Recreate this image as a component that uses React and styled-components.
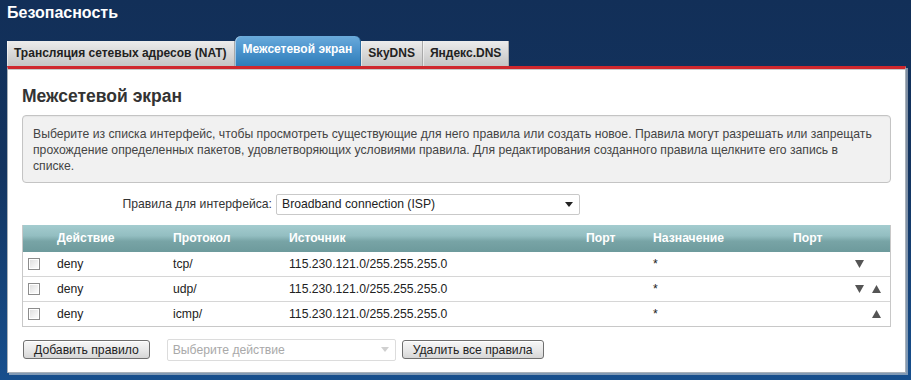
import React from "react";
import styled, { createGlobalStyle } from "styled-components";

const FS = "12.2px";

const GlobalStyle = createGlobalStyle`
  html, body {
    margin: 0;
    padding: 0;
  }
  body {
    font-family: "Liberation Sans", Arial, sans-serif;
    font-size: ${FS};
    background: linear-gradient(180deg, #122f58 0%, #133460 45%, #174f8d 100%);
    min-height: 380px;
    overflow: hidden;
  }
`;

const Page = styled.div`
  padding: 0 5px 0 7px;
  height: 380px;
  box-sizing: border-box;
`;

const Header = styled.div`
  height: 36px;
  box-sizing: border-box;
  padding-top: 4px;
`;

const PageTitle = styled.h1`
  margin: 0;
  color: #fff;
  font-size: 16px;
  line-height: 18px;
  font-weight: bold;
`;

const TabBar = styled.div`
  display: flex;
  align-items: flex-end;
  height: 29.5px;
`;

const Tab = styled.div`
  box-sizing: border-box;
  height: ${(p) => (p.$active ? "30px" : "24.5px")};
  padding: ${(p) => (p.$active ? "0 8px 4px" : "0 7px")};
  display: flex;
  align-items: center;
  font-weight: bold;
  font-size: 12px;
  color: ${(p) => (p.$active ? "#fff" : "#222")};
  background: ${(p) =>
    p.$active
      ? "linear-gradient(180deg, #6aaadb 0%, #4a93cc 50%, #2f7db8 100%)"
      : "linear-gradient(180deg, #ececec 0%, #d6d6d6 55%, #c4c4c4 100%)"};
  border-radius: ${(p) => (p.$active ? "6px 6px 0 0" : "0")};
  border-right: 1px solid ${(p) => (p.$active ? "#2f6fa3" : "#a9a9a9")};
  box-shadow: inset 1px 0 0 rgba(255, 255, 255, 0.5);
  white-space: nowrap;
`;

const Panel = styled.div`
  width: 899px;
  box-sizing: border-box;
  background: #fff;
  border-top: 3px solid #cf272d;
  border-left: 1px solid #a8b0b8;
  border-right: 1px solid #a8b0b8;
  border-bottom: 1px solid #a8b0b8;
  box-shadow: inset 0 1px 0 #c9c9c9, 2px 2px 0 rgba(200, 205, 210, 0.6);
  padding: 17px 14px 11px 14px;
`;

const Heading = styled.h2`
  margin: 0 0 9px 0;
  font-size: 17.5px;
  line-height: 20px;
  color: #333;
  font-weight: bold;
`;

const InfoBox = styled.div`
  background: #f1f1f1;
  border: 1px solid #c4c4c4;
  border-radius: 4px;
  box-shadow: inset 0 1px 1px rgba(0, 0, 0, 0.04);
  padding: 10px 10px 8px 10px;
  color: #444;
  font-size: ${FS};
  line-height: 16px;
`;

const FieldRow = styled.div`
  display: flex;
  align-items: center;
  margin-top: 11px;
`;

const FieldLabel = styled.label`
  width: 250px;
  text-align: right;
  margin-right: 4px;
  color: #333;
  font-size: ${FS};
`;

const Select = styled.div`
  box-sizing: border-box;
  width: ${(p) => p.$width}px;
  height: ${(p) => p.$height || 21}px;
  border: 1px solid ${(p) => (p.$disabled ? "#dcdcdc" : "#c9c9c9")};
  border-radius: 2px;
  background: #fff;
  display: flex;
  align-items: center;
  justify-content: space-between;
  padding: 0 6px 0 5px;
  color: ${(p) => (p.$disabled ? "#a9a9a9" : "#222")};
  font-size: ${FS};
`;

const Caret = styled.span`
  width: 0;
  height: 0;
  border-left: 4px solid transparent;
  border-right: 4px solid transparent;
  border-top: 5px solid ${(p) => (p.$disabled ? "#d0d0d0" : "#222")};
`;

const Table = styled.div`
  margin-top: 10px;
  border: 1px solid #c8c8c8;
  border-top: none;
`;

const Row = styled.div`
  display: grid;
  grid-template-columns: 34px 116px 116px 297px 67px 140px 58px 1fr;
  align-items: center;
  height: ${(p) => (p.$head ? "27px" : "24px")};
  border-top: ${(p) => (p.$head ? "none" : "1px solid #d6d6d6")};
  background: ${(p) =>
    p.$head
      ? "linear-gradient(180deg, #a4cccf 0%, #93bec1 40%, #78a4a6 60%, #6d9a9c 100%)"
      : "#fff"};
  color: ${(p) => (p.$head ? "#fff" : "#222")};
  font-weight: ${(p) => (p.$head ? "bold" : "normal")};
  font-size: ${FS};
  &:nth-child(2) {
    border-top: none;
  }
`;

const Cell = styled.div`
  white-space: nowrap;
`;

const Checkbox = styled.span`
  display: block;
  box-sizing: border-box;
  width: 12px;
  height: 12px;
  margin-left: 5px;
  border: 1px solid #8d8d8d;
  background: linear-gradient(135deg, #dcdcdc 0%, #f6f6f6 70%, #fff 100%);
  box-shadow: inset 0 0 0 1px #fff;
`;

const Arrows = styled.div`
  display: flex;
  padding-left: 4px;
  gap: 8px;
`;

const Arrow = styled.span`
  width: 9px;
  height: 8px;
  display: flex;
  justify-content: center;
  svg {
    display: block;
  }
`;

const Actions = styled.div`
  display: flex;
  align-items: center;
  margin-top: 12px;
  margin-left: 1px;
`;

const Button = styled.button`
  box-sizing: border-box;
  height: 19px;
  padding: 0 10px;
  border: 1px solid #6f6f6f;
  border-radius: 3px;
  background: linear-gradient(180deg, #f7f7f7 0%, #e9e9e9 50%, #d6d6d6 100%);
  font-family: "Liberation Sans", Arial, sans-serif;
  font-size: ${FS};
  color: #222;
  margin: 0 ${(p) => p.$right || 0}px 0 ${(p) => p.$left || 0}px;
  box-shadow: inset 0 1px 0 #fff;
`;

const Tri = ({ up }) => (
  <svg width="9" height="8" viewBox="0 0 9 8">
    <path d={up ? "M4.5 0 L9 8 L0 8 Z" : "M0 0 L9 0 L4.5 8 Z"} fill="#555" />
  </svg>
);

const tabs = [
  "Трансляция сетевых адресов (NAT)",
  "Межсетевой экран",
  "SkyDNS",
  "Яндекс.DNS",
];

const rules = [
  { proto: "tcp/", down: true, up: false },
  { proto: "udp/", down: true, up: true },
  { proto: "icmp/", down: false, up: true },
];

export default function App() {
  return (
    <>
      <GlobalStyle />
      <Page>
        <Header>
          <PageTitle>Безопасность</PageTitle>
        </Header>
        <TabBar>
          {tabs.map((t, i) => (
            <Tab key={t} $active={i === 1}>
              {t}
            </Tab>
          ))}
        </TabBar>
        <Panel>
          <Heading>Межсетевой экран</Heading>
          <InfoBox>
            Выберите из списка интерфейс, чтобы просмотреть существующие для
            него правила или создать новое. Правила могут разрешать или
            запрещать прохождение определенных пакетов, удовлетворяющих
            условиями правила. Для редактирования созданного правила щелкните
            его запись в списке.
          </InfoBox>
          <FieldRow>
            <FieldLabel>Правила для интерфейса:</FieldLabel>
            <Select $width={304}>
              Broadband connection (ISP)
              <Caret />
            </Select>
          </FieldRow>
          <Table>
            <Row $head>
              <Cell />
              <Cell>Действие</Cell>
              <Cell>Протокол</Cell>
              <Cell>Источник</Cell>
              <Cell>Порт</Cell>
              <Cell>Назначение</Cell>
              <Cell>Порт</Cell>
              <Cell />
            </Row>
            {rules.map((r) => (
              <Row key={r.proto}>
                <Cell>
                  <Checkbox />
                </Cell>
                <Cell>deny</Cell>
                <Cell>{r.proto}</Cell>
                <Cell>115.230.121.0/255.255.255.0</Cell>
                <Cell />
                <Cell>*</Cell>
                <Cell />
                <Arrows>
                  <Arrow>{r.down && <Tri />}</Arrow>
                  <Arrow>{r.up && <Tri up />}</Arrow>
                </Arrows>
              </Row>
            ))}
          </Table>
          <Actions>
            <Button $right={17}>Добавить правило</Button>
            <Select $width={229} $height={22} $disabled>
              Выберите действие
              <Caret $disabled />
            </Select>
            <Button $left={6}>Удалить все правила</Button>
          </Actions>
        </Panel>
      </Page>
    </>
  );
}
